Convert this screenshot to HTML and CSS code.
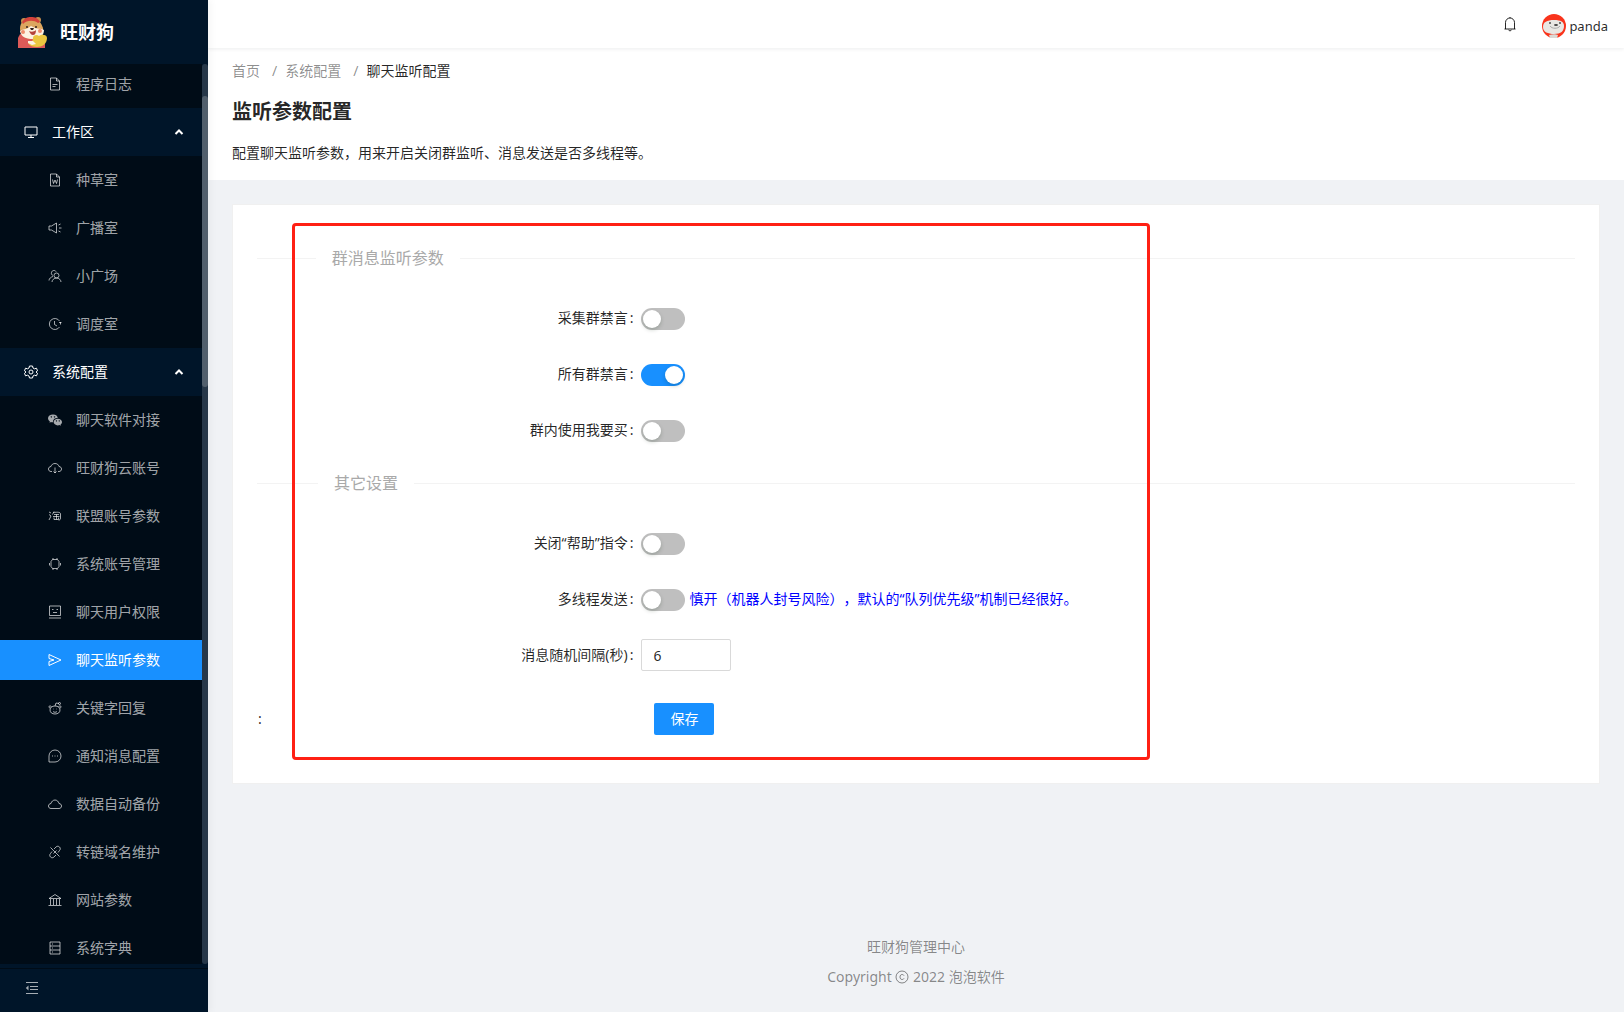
FILE: index.html
```html
<!DOCTYPE html>
<html lang="zh-CN">
<head>
<meta charset="utf-8">
<title>聊天监听配置 - 旺财狗</title>
<link rel="stylesheet" href="styles.css">
</head>
<body>
<div class="layout">
  <aside class="sider">
    <a class="brand" href="#">
      <svg class="brand-logo" viewBox="0 0 30 32" aria-hidden="true">
        <path d="M0 32V22c1-3 3-5 6-6h14l7 5v11z" fill="#dd5a58"/>
        <circle cx="6" cy="5" r="3" fill="#c98f4e"/><circle cx="20" cy="4" r="3" fill="#c98f4e"/>
        <path d="M2 13C2 6 6 3 13 3s10 3 12 9c1 6-4 11-11 11S3 20 2 13z" fill="#dca65f"/>
        <path d="M2 15c2-2 5-1 8-3l3-2 4 2c3 1 6 0 9 2 0 6-5 9-11 9-7 0-12-2-13-8z" fill="#fdf1e2"/>
        <path d="M4 6C7 2 9 1 13 1s7 1 9 5l-2 1C16 4 9 4 5 8z" fill="#d5433c"/>
        <circle cx="9" cy="11" r="1" fill="#35221c"/><circle cx="18" cy="11" r="1" fill="#35221c"/>
        <path d="M12 12h4l-1 2h-2z" fill="#35221c"/><path d="M11 15c2 1 5 1 7-1 0 3-1 5-3 5s-3-2-4-4z" fill="#b5433c"/>
        <circle cx="5" cy="16" r="2" fill="#ef8d6c"/><circle cx="22" cy="15" r="2" fill="#ef8d6c"/>
        <path d="M15 22c0-3 4-4 6-2 2-2 8-2 8 2 0 6-5 9-10 9-4 0-7-1-9-4 3 0 5-2 5-5z" fill="#ebc640"/>
        <path d="M10 25l5 0 3 3-4 1-4-2z" fill="#fdf1e2"/>
      </svg>
      <span class="brand-name">旺财狗</span>
    </a>
    <div class="menu-scroll">
      <nav class="menu">
        <ul class="sub sub-first">
          <li><a class="item" href="#"><svg class="icon" viewBox="0 0 14 14"><path d="M2.500 1h6l3 3v9h-9zM8.500 1v3h3M4.500 7.500h5M4.500 9.500h3"/></svg>程序日志</a></li>
        </ul>
        <button class="group" type="button"><svg class="icon" viewBox="0 0 14 14"><path d="M1 2h12v8H1zM7 10v2M4 12.500h6"/></svg><span>工作区</span><svg class="arrow" viewBox="0 0 10 10"><path d="M1.500 7L5 3.500 8.500 7"/></svg></button>
        <ul class="sub">
          <li><a class="item" href="#"><svg class="icon" viewBox="0 0 14 14"><path d="M2.500 1h6l3 3v9h-9zM8.500 1v3h3M4.500 6.500l1 4L7 7l1.500 3.500 1-4"/></svg>种草室</a></li>
          <li><a class="item" href="#"><svg class="icon" viewBox="0 0 14 14"><path d="M1 5h2.500L8.500 2v10l-5-3H1zM11 7h2.500M10.500 4l2-1M10.500 10l2 1"/></svg>广播室</a></li>
          <li><a class="item" href="#"><svg class="icon" viewBox="0 0 14 14"><circle cx="8.500" cy="6.500" r="2.500"/><path d="M4 13c0-2 2-4 4.500-4s4.500 2 4.500 4M8 2.500C7 1 4 1 3.500 3.500 3 5 4 6 5 6.500M5 7.500C3 8 1 9.500 1 11.500"/></svg>小广场</a></li>
          <li><a class="item" href="#"><svg class="icon" viewBox="0 0 14 14"><path d="M11.500 4A5.500 5.500 0 1 0 11.500 10M6.500 4v3.500L9 9M12.500 5v2.500M11 5.500h2.500"/></svg>调度室</a></li>
        </ul>
        <button class="group" type="button"><svg class="icon" viewBox="0 0 14 14"><path d="M5.500 1h3l.5 2 1.500.8 2-.6 1 2.600L12 7l1.500 1.300-1 2.500-2-.6L9 11l-.5 2h-3L5 11l-1.500-.8-2 .6-1-2.500L2 7 .5 5.800l1-2.600 2 .6L5 3z"/><circle cx="7" cy="7" r="2"/></svg><span>系统配置</span><svg class="arrow" viewBox="0 0 10 10"><path d="M1.500 7L5 3.500 8.500 7"/></svg></button>
        <ul class="sub">
          <li><a class="item" href="#"><svg class="icon" viewBox="0 0 14 14"><path class="solid" fill-rule="evenodd" d="M5 1.500c3 0 4.700 1.700 4.700 3.500C7 5 4.700 6.500 5 9.300c-1 0-1.300-.1-2-.3l-1.500.8.4-1.400C.7 7.500 0 6.500 0 5.300 0 3.200 2.200 1.500 5 1.500zM3.300 3.300a.7.7 0 1 0 .1 0zM6.500 3.300a.7.700 0 1 0 .1 0z"/><path class="solid" fill-rule="evenodd" d="M9.800 5.700c2.300 0 4.200 1.500 4.200 3.400 0 1-.6 1.900-1.400 2.500l.3 1.200-1.400-.7c-.5.200-1 .3-1.700.3-2.300 0-4.200-1.500-4.200-3.300s1.900-3.400 4.200-3.400zM8.400 7.300a.6.600 0 1 0 .1 0zM11.200 7.300a.6.600 0 1 0 .1 0z"/></svg>聊天软件对接</a></li>
          <li><a class="item" href="#"><svg class="icon" viewBox="0 0 14 14"><path d="M4 10.500H3C1.500 10.500.5 9.500.5 8S1.500 5.700 3 5.500C3.500 3.500 5 2.500 7 2.500s3.500 1 4 3c1.500.2 2.500 1 2.500 2.500s-1 2.500-2.500 2.500h-1M7 6.500V12M5.500 10.500L7 12l1.500-1.500"/></svg>旺财狗云账号</a></li>
          <li><a class="item" href="#"><svg class="icon" viewBox="0 0 14 14"><path d="M1 3l2 1M1 5.500l2 1.500-2 4M6 2.500L4.500 5.500M5.500 3.500c4-.5 7-.5 7 1.500v4c0 1.500-.5 2-2 2M6 5.500h5M5 7.500h6.500M8.500 5.500v5M6 8.500v2h4.500v-2"/></svg>联盟账号参数</a></li>
          <li><a class="item" href="#"><svg class="icon" viewBox="0 0 14 14"><path d="M4.500 2.500h5l1.500 2v5l-1.500 2h-5L3 9.500v-5zM5 2.500V1M9 2.500V1M5 11.500V13M9 11.500V13M1.500 6v2.500M12.500 6v2.500"/></svg>系统账号管理</a></li>
          <li><a class="item" href="#"><svg class="icon" viewBox="0 0 14 14"><path d="M1.500 1h11v9.500h-11zM1 13h12M4 4.500h1.500M8.500 4.500H10M5 7.500h4"/></svg>聊天用户权限</a></li>
          <li><a class="item active" href="#" aria-current="page"><svg class="icon" viewBox="0 0 14 14"><path d="M1 1.500L13 7 1 12.500V8.500L6 7 1 5.500z"/></svg>聊天监听参数</a></li>
          <li><a class="item" href="#"><svg class="icon" viewBox="0 0 14 14"><path d="M7 5c3 0 5 1.500 5 4s-2 4-5 4-5-1.500-5-4 2-4 5-4zM7 5l1-3 3 .5M2.500 7C.5 7 .5 5 2 4.800L3.500 5.500M11.500 7c2 0 2-2 .5-2.200l-1.500.7M5 10.500c1 1 3 1 4 0M5 8h.5M8.500 8H9"/><circle cx="11.500" cy="2.500" r="1"/></svg>关键字回复</a></li>
          <li><a class="item" href="#"><svg class="icon" viewBox="0 0 14 14"><path d="M1 13V7a6 6 0 1 1 6 6zM4 7h1M6.500 7h1M9 7h1"/></svg>通知消息配置</a></li>
          <li><a class="item" href="#"><svg class="icon" viewBox="0 0 14 14"><path d="M3 11.500C1.500 11.500.5 10.500.5 9S1.500 6.700 3 6.500C3.500 4.500 5 3 7 3s3.500 1.500 4 3.500c1.500.2 2.500 1 2.500 2.500s-1 2.500-2.500 2.500z"/></svg>数据自动备份</a></li>
          <li><a class="item" href="#"><svg class="icon" viewBox="0 0 14 14"><path d="M6 4l2-2c1-1 2.500-1 3.500 0s1 2.500 0 3.500L10 7.500M8 10l-2 2c-1 1-2.500 1-3.500 0s-1-2.500 0-3.500L4 6.500M2.500 2.500l9 9M5.500 8.500l3-3"/></svg>转链域名维护</a></li>
          <li><a class="item" href="#"><svg class="icon" viewBox="0 0 14 14"><path d="M1 5.500L7 1.500l6 4zM2.500 6v6M5.500 6v6M8.500 6v6M11.500 6v6M.5 12.500h13"/></svg>网站参数</a></li>
          <li><a class="item" href="#"><svg class="icon" viewBox="0 0 14 14"><path d="M2 1h10v12H2zM2 5h10M2 9h10M4 3h1M4 7h1M4 11h1"/></svg>系统字典</a></li>
        </ul>
      </nav>
      <div class="scrollbar"><div class="thumb"></div></div>
    </div>
    <div class="sider-foot">
      <button class="collapse" type="button" aria-label="收起菜单"><svg class="icon" viewBox="0 0 14 14"><path d="M1 1.500h12M5 5.500h8M5 8.500h8M1 12.500h12"/><path class="solid" d="M3.500 4.500v5L.8 7z"/></svg></button>
    </div>
  </aside>

  <div class="main">
    <header class="topbar">
      <button class="bell" type="button" aria-label="通知"><svg viewBox="0 0 16 16"><path d="M2.500 13h11M3.500 13V6.500a4.500 4.500 0 0 1 9 0V13M8 2V1M6.500 14c.5 1 2.500 1 3 0"/></svg></button>
      <a class="user" href="#">
        <svg class="avatar" viewBox="0 0 24 24" aria-hidden="true">
          <circle cx="12" cy="12" r="12" fill="#f9341c"/>
          <path d="M1 13c0-5 4-7 11-7s10 2 10 6c0 5-3 8-10 8-6 0-11-2-11-7z" fill="#e9e7e3"/>
          <path d="M7 21c3-1 7-1 9 0l-1 3H8z" fill="#dcd9d4"/>
          <circle cx="8" cy="9" r="1" fill="#4c4c4c"/><circle cx="18" cy="9" r="1" fill="#4c4c4c"/>
          <ellipse cx="14" cy="11" rx="2" ry="1" fill="#444"/>
          <path d="M8 12c2 3 8 3 10 0" fill="none" stroke="#aaa"/>
        </svg>
        <span>panda</span>
      </a>
    </header>

    <section class="page-head">
      <nav class="crumbs" aria-label="面包屑">
        <a href="#">首页</a><span class="sep">/</span><a href="#">系统配置</a><span class="sep">/</span><span class="here">聊天监听配置</span>
      </nav>
      <h1>监听参数配置</h1>
      <p>配置聊天监听参数，用来开启关闭群监听、消息发送是否多线程等。</p>
    </section>

    <main class="content">
      <form class="card">
        <h2 class="divider"><span>群消息监听参数</span></h2>
        <div class="row"><label for="s1">采集群禁言<span class="colon">:</span></label><input class="switch" id="s1" type="checkbox" role="switch"></div>
        <div class="row"><label for="s2">所有群禁言<span class="colon">:</span></label><input class="switch" id="s2" type="checkbox" role="switch" checked></div>
        <div class="row"><label for="s3">群内使用我要买<span class="colon">:</span></label><input class="switch" id="s3" type="checkbox" role="switch"></div>
        <h2 class="divider"><span>其它设置</span></h2>
        <div class="row"><label for="s4">关闭“帮助”指令<span class="colon">:</span></label><input class="switch" id="s4" type="checkbox" role="switch"></div>
        <div class="row"><label for="s5">多线程发送<span class="colon">:</span></label><input class="switch" id="s5" type="checkbox" role="switch"><span class="hint">慎开（机器人封号风险），默认的“队列优先级”机制已经很好。</span></div>
        <div class="row"><label for="gap">消息随机间隔(秒)<span class="colon">:</span></label><input class="number" id="gap" type="text" inputmode="numeric" value="6"></div>
        <div class="row row-submit"><span class="blank">:</span><button class="save" type="submit">保存</button></div>
      </form>
      <div class="marker"></div>
    </main>

    <footer class="foot">
      <p>旺财狗管理中心</p>
      <p>Copyright <svg viewBox="0 0 14 14" aria-label="©"><circle cx="7" cy="7" r="6"/><path d="M9 5.500C8 4 5 4 5 7s3 3 4 1.500"/></svg> 2022 泡泡软件</p>
    </footer>
  </div>
</div>
</body>
</html>
```
FILE: styles.css
```css
* { box-sizing: border-box; }
body {
  margin: 0;
  font: 14px/22px "Noto Sans", "Noto Sans CJK SC", sans-serif;
  text-spacing-trim: space-all;
  color: rgba(0, 0, 0, .85);
  background: #f0f2f5;
}
a { color: inherit; text-decoration: none; }
button { font: inherit; color: inherit; border: 0; background: none; padding: 0; cursor: pointer; }
ul { list-style: none; margin: 0; padding: 0; }
h1, h2, p { margin: 0; }

.layout { display: flex; height: 100vh; }

/* Sidebar */
.sider {
  position: relative;
  z-index: 1;
  flex: none;
  width: 208px;
  display: flex;
  flex-direction: column;
  background: #001529;
  color: rgba(255, 255, 255, .65);
  box-shadow: 2px 0 8px rgba(29, 35, 41, .05);
}
.brand { flex: none; height: 64px; display: flex; align-items: center; gap: 12px; padding: 0 18px; }
.brand-logo { width: 30px; height: 32px; }
.brand-name { color: #fff; font-size: 18px; font-weight: 700; }
.menu-scroll { flex: 1; min-height: 0; display: flex; }
.menu { flex: 1; overflow: hidden; }
.sub { background: #000c17; padding: 4px 0; display: grid; gap: 8px; }
.sub-first { padding-top: 0; }
.item { display: flex; align-items: center; gap: 14px; height: 40px; padding-left: 48px; }
.item.active { background: #1890ff; color: #fff; }
.group { width: 100%; height: 48px; display: flex; align-items: center; gap: 14px; padding: 0 18px 0 24px; color: #fff; }
.icon { flex: none; width: 14px; height: 14px; fill: none; stroke: currentColor; }
.solid { fill: currentColor; stroke: none; }
.arrow { width: 10px; height: 10px; margin-left: auto; fill: none; stroke: currentColor; stroke-width: 2; }
.scrollbar { width: 6px; padding-top: 32px; border-radius: 3px; background: rgba(255, 255, 255, .15); }
.thumb { height: 291px; border-radius: 3px; background: rgba(255, 255, 255, .2); }
.sider-foot { flex: none; height: 48px; padding: 4px 0 0; }
.collapse { display: flex; align-items: center; width: 100%; height: 38px; padding-left: 25px; border-top: 1px solid #000c17; }

/* Header */
.main { flex: 1; min-width: 0; display: flex; flex-direction: column; }
.topbar {
  position: relative;
  flex: none;
  height: 48px;
  display: flex;
  justify-content: flex-end;
  align-items: center;
  gap: 24px;
  padding: 0 16px;
  background: #fff;
  box-shadow: 0 1px 4px rgba(0, 21, 41, .08);
}
.bell { width: 16px; height: 16px; }
.bell svg { display: block; fill: none; stroke: currentColor; }
.user { display: flex; align-items: center; gap: 3px; padding-top: 4px; font-size: 13px; }
.avatar { width: 24px; height: 24px; }

.page-head { flex: none; padding: 12px 24px 16px; background: #fff; }
.crumbs { display: flex; color: rgba(0, 0, 0, .45); }
.sep { padding: 0 8px 0 12px; }
.here { color: rgba(0, 0, 0, .85); }
.page-head h1 { margin: 14px 0; font-size: 20px; line-height: 32px; font-weight: 700; }

/* Form card */
.content { position: relative; padding: 24px; }
.card { padding: 40px 24px 24px; background: #fff; border: 1px solid #f0f0f0; }
.divider { display: flex; align-items: center; height: 26px; margin-bottom: 31px; font-size: 16px; font-weight: 400; color: #a9a9a9; }
.divider::before, .divider::after { content: ""; border-top: 1px solid #f3f3f3; }
.divider::before { width: 5%; }
.divider::after { width: 95%; }
.divider span { white-space: nowrap; padding: 0 16px; }
.row { display: flex; align-items: center; min-height: 32px; margin-bottom: 24px; }
.row label { width: 29.17%; padding-right: 8px; text-align: right; }
.colon { margin-left: 2px; }
.row .blank { width: 29.17%; padding-left: 1px; }
.switch {
  appearance: none;
  width: 44px;
  height: 22px;
  margin: 2px 0 0;
  padding: 2px;
  border-radius: 11px;
  background: #bfbfbf;
}
.switch::before {
  content: "";
  display: block;
  width: 18px;
  height: 18px;
  border-radius: 50%;
  background: #fff;
  box-shadow: 0 2px 4px rgba(0, 35, 11, .2);
}
.switch:checked { background: #1890ff; }
.switch:checked::before { margin-left: auto; }
.hint { padding-left: 4px; color: #00f; }
.number { width: 90px; height: 32px; padding: 4px 11px; border: 1px solid #d9d9d9; border-radius: 2px; font: inherit; color: inherit; }
.row-submit { padding-top: 8px; }
.save { width: 60px; height: 32px; margin-left: 13px; border-radius: 2px; background: #1890ff; color: #fff; }

/* Highlight frame laid over the form */
.marker {
  position: absolute;
  top: 43px;
  left: 84px;
  width: 858px;
  height: 537px;
  border: 3px solid #ff2014;
  border-radius: 4px;
  pointer-events: none;
}

.foot { margin-top: auto; padding-bottom: 24px; text-align: center; color: rgba(0, 0, 0, .45); }
.foot p + p { margin-top: 8px; }
.foot svg { width: 14px; height: 14px; vertical-align: -2px; fill: none; stroke: currentColor; }
```
